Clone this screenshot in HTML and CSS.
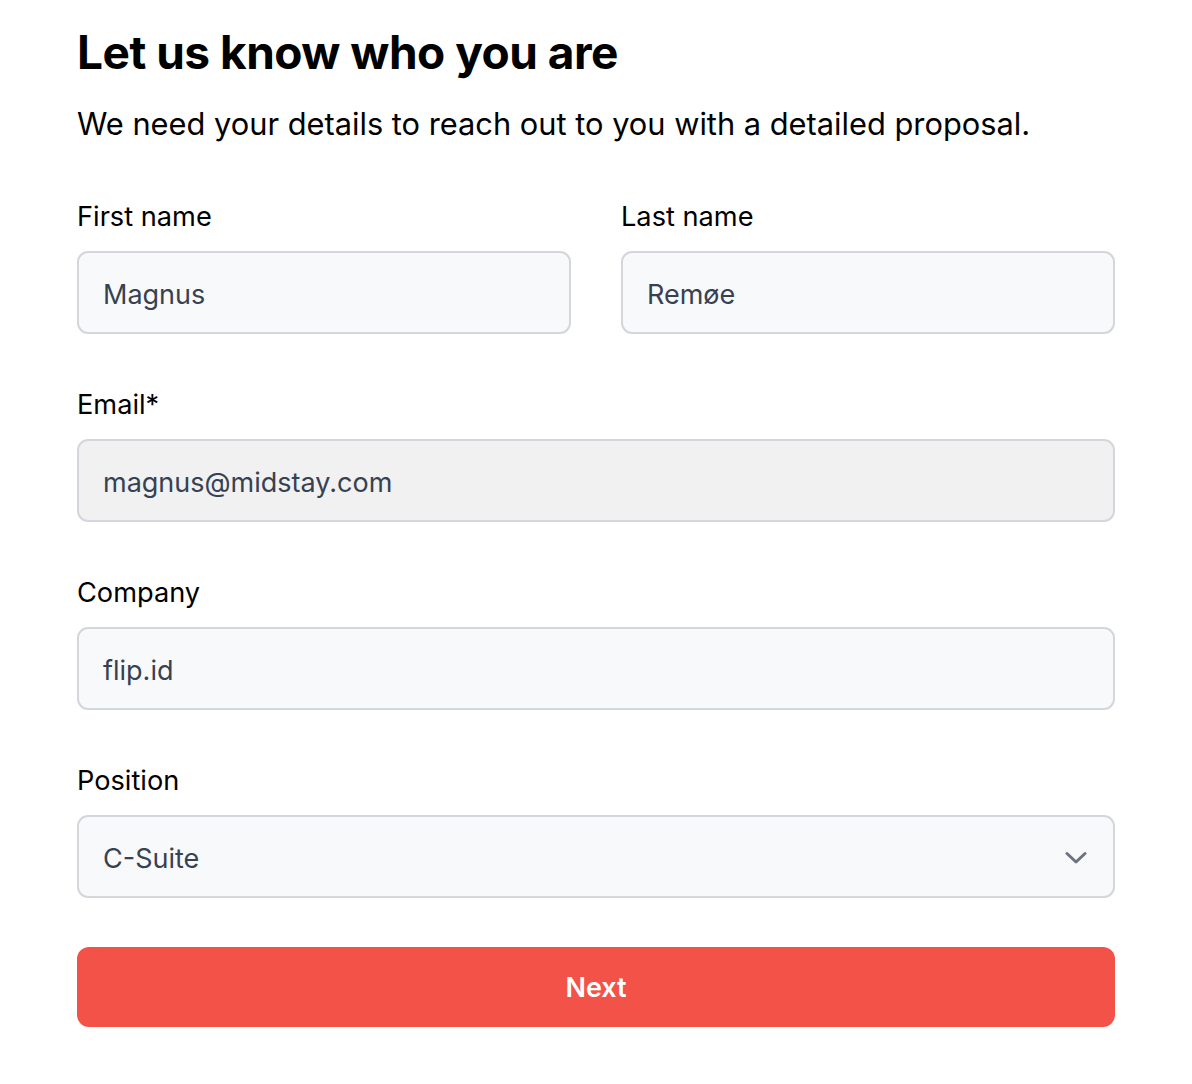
FILE: index.html
```html
<!DOCTYPE html>
<html lang="en">
<head>
<meta charset="utf-8">
<title>Let us know who you are</title>
<link rel="stylesheet" href="styles.css">
</head>
<body>
<main class="page">
  <h1 class="title">Let us know who you are</h1>
  <p class="subtitle">We need your details to reach out to you with a detailed proposal.</p>
  <form class="form">
    <div class="fields">
      <div class="row">
        <div class="field">
          <label class="label">First name</label>
          <div class="input">Magnus</div>
        </div>
        <div class="field">
          <label class="label">Last name</label>
          <div class="input">Remøe</div>
        </div>
      </div>
      <div class="field">
        <label class="label">Email*</label>
        <div class="input input-disabled">magnus@midstay.com</div>
      </div>
      <div class="field">
        <label class="label">Company</label>
        <div class="input">flip.id</div>
      </div>
      <div class="field">
        <label class="label">Position</label>
        <div class="input select">
          <span>C-Suite</span>
          <svg class="chevron" width="22" height="14" viewBox="0 0 22 14" fill="none"><path d="M2 2.5 L11 11 L20 2.5" stroke="#6b7280" stroke-width="3" stroke-linecap="round" stroke-linejoin="round"/></svg>
        </div>
      </div>
    </div>
    <button type="button" class="btn">Next</button>
  </form>
</main>
</body>
</html>
```
FILE: styles.css
```css
* { box-sizing: border-box; }
html, body { margin: 0; padding: 0; background: #ffffff; }
body { font-family: Inter, "Noto Sans", "Liberation Sans", sans-serif; color: #000; }
.page { width: 1038px; margin-left: 77px; padding-top: 22px; }
.title { margin: 0; font-size: 46px; font-weight: 700; line-height: 60px; letter-spacing: -0.5px; }
.subtitle { margin: 20px 0 0; font-size: 30.8px; line-height: 44px; font-weight: 400; }
.form { display: flex; flex-direction: column; gap: 49px; margin-top: 54px; }
.fields { display: flex; flex-direction: column; gap: 54px; }
.row { display: grid; grid-template-columns: 1fr 1fr; gap: 50px; }
.field { display: flex; flex-direction: column; gap: 17px; }
.label { font-size: 27.2px; line-height: 34px; }
.input { height: 83px; border: 2px solid #d4d6dc; border-radius: 11px; background: #f8f9fb; padding: 4px 24px 0 24px; display: flex; align-items: center; font-size: 27px; color: #374151; }
.input-disabled { background: #f1f1f2; }
.select { justify-content: space-between; padding-right: 26px; }
.chevron { display: block; margin-top: -2px; }
.btn { height: 80px; border: none; border-radius: 12px; background: #f25247; color: #fff; font-family: inherit; font-size: 27px; font-weight: 600; cursor: pointer; }
```
